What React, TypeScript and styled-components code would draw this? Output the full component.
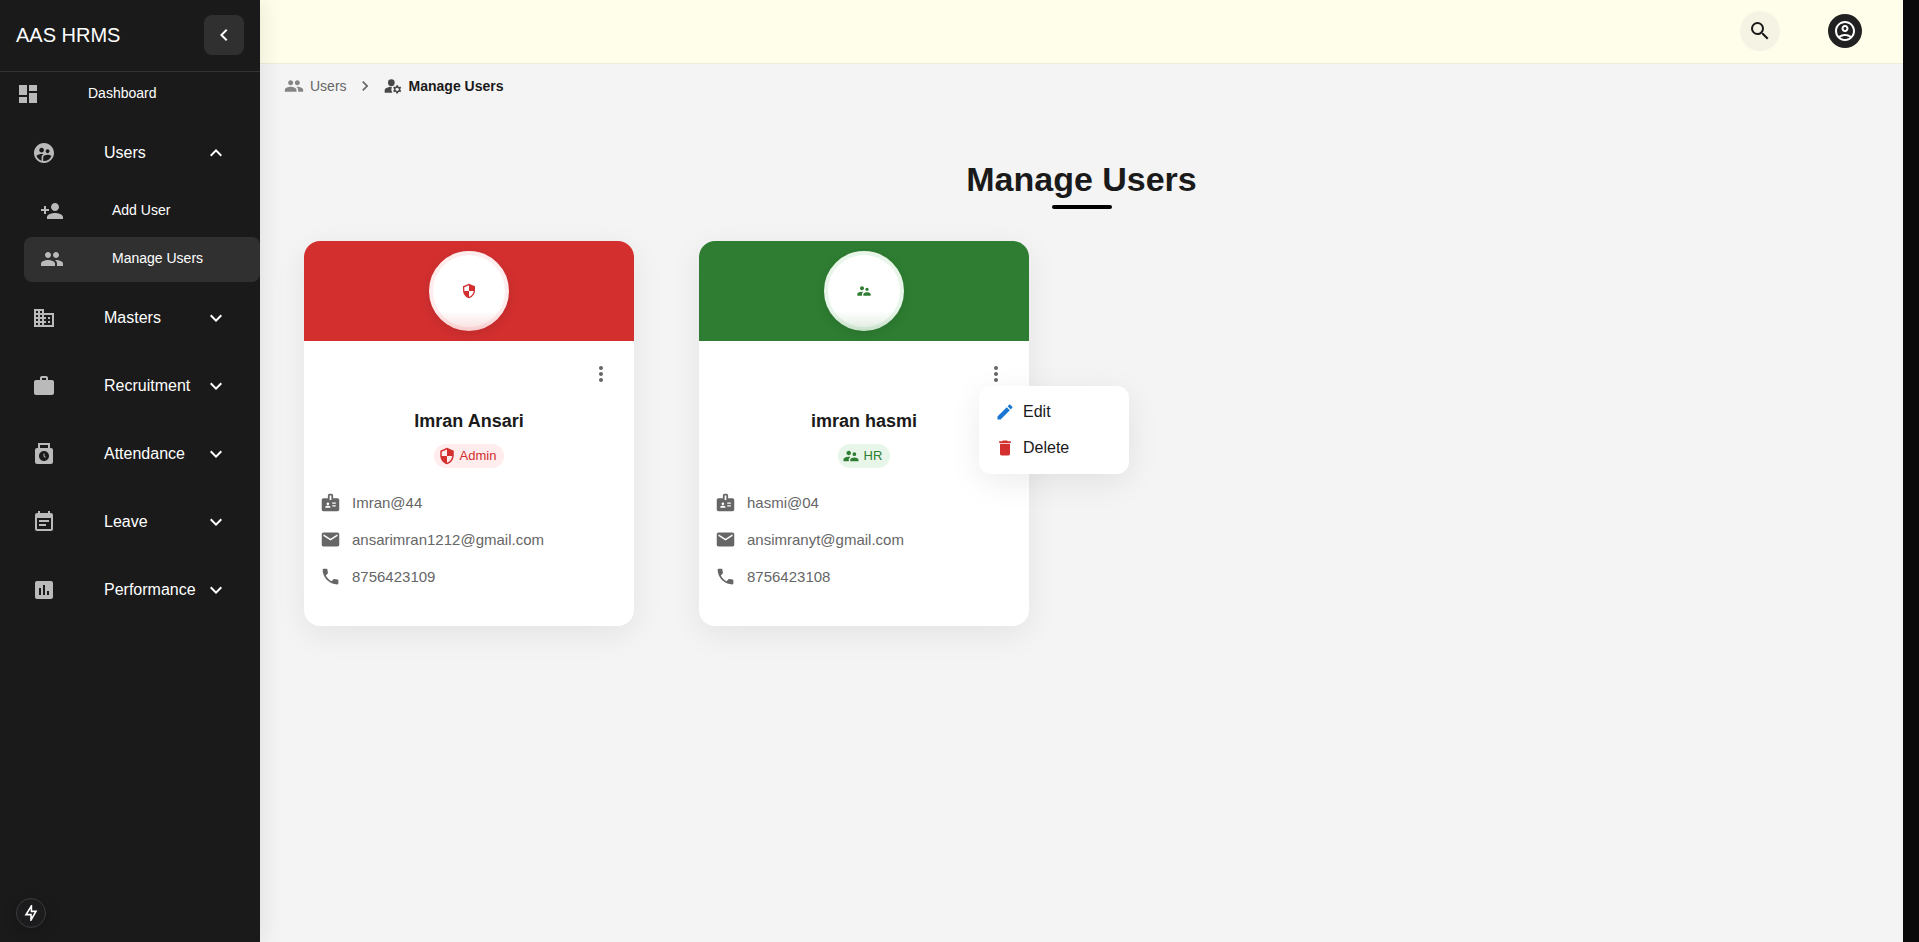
import React, { useState } from 'react';
import styled, { createGlobalStyle } from 'styled-components';
import type { IconType } from 'react-icons';
import {
  MdAssessment,
  MdBadge,
  MdBusiness,
  MdChevronLeft,
  MdDashboard,
  MdDelete,
  MdEdit,
  MdEmail,
  MdEventNote,
  MdExpandLess,
  MdExpandMore,
  MdManageAccounts,
  MdMoreVert,
  MdNavigateNext,
  MdOutlineAccountCircle,
  MdPeople,
  MdPersonAdd,
  MdPhone,
  MdPunchClock,
  MdSearch,
  MdSecurity,
  MdSupervisedUserCircle,
  MdSupervisorAccount,
  MdWork,
} from 'react-icons/md';

const GlobalStyle = createGlobalStyle`
  * { box-sizing: border-box; }
  body {
    margin: 0;
    background: #0a0a0a;
    color: #1a1a1a;
    font-family: "Liberation Sans", Arial, sans-serif;
  }
  button { font: inherit; color: inherit; border: 0; padding: 0; background: none; cursor: pointer; }
  a { color: inherit; text-decoration: none; }
  ul, ol { list-style: none; margin: 0; padding: 0; }
  svg { display: block; flex: none; }
`;

const Shell = styled.div`
  display: flex;
  min-height: 100vh;
  padding-right: 16px;
`;

const Sidebar = styled.aside`
  position: relative;
  z-index: 1;
  flex: 0 0 260px;
  background: #1a1a1a;
  color: #fff;
  box-shadow: 4px 0 20px rgba(0, 0, 0, 0.08);
`;

const Brand = styled.div`
  display: flex;
  align-items: center;
  justify-content: space-between;
  height: 72px;
  padding: 0 16px 1px;
  border-bottom: 1px solid #333;
  font-size: 20px;
  line-height: 30px;
`;

const CollapseButton = styled.button`
  display: grid;
  place-items: center;
  width: 40px;
  height: 40px;
  border-radius: 8px;
  background: #303030;
`;

const NavLink = styled.a<{ $nested?: boolean; $active?: boolean }>`
  display: flex;
  align-items: center;
  gap: 48px;
  height: 45px;
  padding: 0 16px 2px;
  margin-left: ${(p) => (p.$nested ? '24px' : '0')};
  border-radius: 8px;
  background: ${(p) => (p.$active ? '#303030' : 'transparent')};
  font-size: 14px;
  line-height: 19px;
  svg { color: #bababa; }
`;

const NavGroupButton = styled.button`
  display: flex;
  align-items: center;
  width: 100%;
  height: 68px;
  padding: 0 32px;
  font-size: 16px;
  line-height: 24px;
  text-align: left;
`;

const GroupIcon = styled.span`
  color: #bababa;
  margin-right: 48px;
`;

const GroupLabel = styled.span`
  flex: 1;
`;

const NavTop = styled.div`
  padding-bottom: 2px;
`;

const SubList = styled.ul`
  display: grid;
  gap: 3px;
  padding: 2px 0;
`;

const DevBadge = styled.button`
  position: fixed;
  left: 16px;
  bottom: 14px;
  z-index: 2;
  display: grid;
  place-items: center;
  width: 30px;
  height: 30px;
  border: 1px solid #3c3c3c;
  border-radius: 50%;
  background: #1c1c1e;
  box-shadow: 0 4px 16px rgba(0, 0, 0, 0.2);
`;

const Page = styled.div`
  flex: 1;
  min-width: 0;
  background: #f4f4f4;
`;

const TopBar = styled.header`
  display: flex;
  align-items: center;
  justify-content: flex-end;
  gap: 48px;
  height: 64px;
  padding: 0 41px 1px;
  background: #fffeeb;
  border-bottom: 1px solid #eeeddb;
`;

const SearchButton = styled.button`
  display: grid;
  place-items: center;
  width: 40px;
  height: 40px;
  border-radius: 50%;
  background: #f5f3e3;
  color: #1a1a1a;
`;

const AccountButton = styled.button`
  display: grid;
  place-items: center;
  width: 34px;
  height: 34px;
  border-radius: 50%;
  background: #212121;
  color: #fff;
`;

const Main = styled.main`
  padding: 12px 24px 24px;
`;

const Crumbs = styled.ol`
  display: flex;
  align-items: center;
  gap: 8px;
  height: 20px;
  font-size: 14px;
  line-height: 20px;
`;

const Crumb = styled.li<{ $current?: boolean }>`
  display: flex;
  align-items: center;
  gap: 6px;
  color: ${(p) => (p.$current ? '#1a1a1a' : '#666')};
  font-weight: ${(p) => (p.$current ? 700 : 400)};
  svg { color: ${(p) => (p.$current ? '#484848' : '#858585')}; }
`;

const CrumbLink = styled.a`
  display: flex;
  align-items: center;
  gap: 6px;
`;

const CrumbSeparator = styled.li`
  color: #666;
`;

const Title = styled.h1`
  display: flex;
  flex-direction: column;
  align-items: center;
  gap: 5px;
  margin: 62px 0 32px;
  font-size: 34px;
  line-height: 42px;
  font-weight: 700;
  &::after {
    content: "";
    width: 60px;
    height: 4px;
    border-radius: 2px;
    background: #000;
  }
`;

const CardGrid = styled.div`
  display: grid;
  grid-template-columns: repeat(auto-fill, 330px);
  gap: 48px 65px;
  padding: 0 20px;
`;

const Card = styled.article`
  border-radius: 16px;
  background: #fff;
  box-shadow: 0 8px 32px rgba(0, 0, 0, 0.07);
`;

const CardBanner = styled.div<{ $color: string }>`
  position: relative;
  display: grid;
  place-items: center;
  height: 100px;
  border-radius: 16px 16px 0 0;
  background: ${(p) => p.$color};
  &::after {
    content: "";
    position: absolute;
    inset: auto 0 0;
    height: 30px;
    background: linear-gradient(to top, ${(p) => p.$color}40, transparent);
  }
`;

const Avatar = styled.div<{ $color: string; $tint: string }>`
  display: grid;
  place-items: center;
  width: 80px;
  height: 80px;
  border: 4px solid ${(p) => p.$tint};
  border-radius: 50%;
  background: #fff;
  color: ${(p) => p.$color};
  box-shadow: 0 4px 12px rgba(0, 0, 0, 0.1);
`;

const CardBody = styled.div`
  display: flex;
  flex-direction: column;
  align-items: center;
  padding: 16px 16px 39px;
`;

const MenuAnchor = styled.div`
  position: relative;
  align-self: flex-end;
`;

const MoreButton = styled.button`
  display: grid;
  place-items: center;
  width: 34px;
  height: 34px;
  border-radius: 50%;
  color: #666;
`;

const Menu = styled.div`
  position: absolute;
  top: 29px;
  left: 0;
  z-index: 3;
  width: 150px;
  padding: 8px 0;
  border-radius: 12px;
  background: #fff;
  box-shadow: 0 8px 32px rgba(0, 0, 0, 0.08);
`;

const MenuItem = styled.button<{ $iconColor: string }>`
  display: flex;
  align-items: center;
  gap: 8px;
  width: 100%;
  height: 36px;
  padding: 0 16px;
  font-size: 16px;
  line-height: 24px;
  svg { color: ${(p) => p.$iconColor}; }
`;

const UserName = styled.h2`
  margin: 16px 0 9px;
  font-size: 18px;
  line-height: 28px;
  font-weight: 700;
`;

const RoleChip = styled.span<{ $color: string; $tint: string }>`
  display: flex;
  align-items: center;
  gap: 4px;
  height: 24px;
  padding: 0 8px 0 4px;
  border-radius: 12px;
  background: ${(p) => p.$tint};
  color: ${(p) => p.$color};
  font-size: 13px;
  line-height: 22px;
`;

const ContactList = styled.ul`
  display: grid;
  gap: 16px;
  width: 100%;
  margin-top: 24px;
`;

const ContactRow = styled.li`
  display: flex;
  align-items: center;
  gap: 11px;
  height: 21px;
  color: #666;
  font-size: 15px;
  line-height: 20px;
`;

interface NavGroup {
  label: string;
  icon: IconType;
  children?: { label: string; icon: IconType; active?: boolean }[];
}

const navGroups: NavGroup[] = [
  {
    label: 'Users',
    icon: MdSupervisedUserCircle,
    children: [
      { label: 'Add User', icon: MdPersonAdd },
      { label: 'Manage Users', icon: MdPeople, active: true },
    ],
  },
  { label: 'Masters', icon: MdBusiness },
  { label: 'Recruitment', icon: MdWork },
  { label: 'Attendance', icon: MdPunchClock },
  { label: 'Leave', icon: MdEventNote },
  { label: 'Performance', icon: MdAssessment },
];

const roles = {
  Admin: { color: '#d32f2f', tint: '#ffecec', icon: MdSecurity },
  HR: { color: '#2e7d32', tint: '#e8f5e9', icon: MdSupervisorAccount },
};

interface User {
  name: string;
  role: keyof typeof roles;
  username: string;
  email: string;
  phone: string;
}

const users: User[] = [
  { name: 'Imran Ansari', role: 'Admin', username: 'Imran@44', email: 'ansarimran1212@gmail.com', phone: '8756423109' },
  { name: 'imran hasmi', role: 'HR', username: 'hasmi@04', email: 'ansimranyt@gmail.com', phone: '8756423108' },
];

function UserCard({ user, menuOpen, onToggleMenu }: { user: User; menuOpen: boolean; onToggleMenu: () => void }) {
  const { color, tint, icon: RoleIcon } = roles[user.role];
  return (
    <Card>
      <CardBanner $color={color}>
        <Avatar $color={color} $tint={tint}>
          <RoleIcon size={16} />
        </Avatar>
      </CardBanner>
      <CardBody>
        <MenuAnchor>
          <MoreButton aria-label={`Actions for ${user.name}`} aria-expanded={menuOpen} onClick={onToggleMenu}>
            <MdMoreVert size={24} />
          </MoreButton>
          {menuOpen && (
            <Menu role="menu">
              <MenuItem role="menuitem" $iconColor="#1976d2">
                <MdEdit size={20} />
                Edit
              </MenuItem>
              <MenuItem role="menuitem" $iconColor="#d32f2f">
                <MdDelete size={20} />
                Delete
              </MenuItem>
            </Menu>
          )}
        </MenuAnchor>
        <UserName>{user.name}</UserName>
        <RoleChip $color={color} $tint={tint}>
          <RoleIcon size={18} />
          {user.role}
        </RoleChip>
        <ContactList>
          <ContactRow>
            <MdBadge size={21} />
            {user.username}
          </ContactRow>
          <ContactRow>
            <MdEmail size={21} />
            {user.email}
          </ContactRow>
          <ContactRow>
            <MdPhone size={21} />
            {user.phone}
          </ContactRow>
        </ContactList>
      </CardBody>
    </Card>
  );
}

export default function App() {
  const [openMenu, setOpenMenu] = useState<string | null>('hasmi@04');
  const [openGroup, setOpenGroup] = useState<string | null>('Users');

  return (
    <>
      <GlobalStyle />
      <Shell>
        <Sidebar>
          <Brand>
            AAS HRMS
            <CollapseButton aria-label="Collapse sidebar">
              <MdChevronLeft size={24} />
            </CollapseButton>
          </Brand>
          <nav>
            <NavTop>
              <NavLink href="#dashboard">
                <MdDashboard size={24} />
                Dashboard
              </NavLink>
            </NavTop>
            {navGroups.map(({ label, icon: Icon, children }) => {
              const open = openGroup === label;
              return (
                <div key={label}>
                  <NavGroupButton aria-expanded={open} onClick={() => setOpenGroup(open ? null : label)}>
                    <GroupIcon>
                      <Icon size={24} />
                    </GroupIcon>
                    <GroupLabel>{label}</GroupLabel>
                    {open ? <MdExpandLess size={24} /> : <MdExpandMore size={24} />}
                  </NavGroupButton>
                  {open && children && (
                    <SubList>
                      {children.map(({ label: childLabel, icon: ChildIcon, active }) => (
                        <li key={childLabel}>
                          <NavLink href="#users" $nested $active={active}>
                            <ChildIcon size={24} />
                            {childLabel}
                          </NavLink>
                        </li>
                      ))}
                    </SubList>
                  )}
                </div>
              );
            })}
          </nav>
          <DevBadge aria-label="Developer tools">
            <svg width="16" height="16" viewBox="0 0 16 16" fill="none" stroke="#fff" strokeWidth="1.6">
              <path d="M8.4 1 3 9.6H8V15L13 6.4H8.4Z" />
            </svg>
          </DevBadge>
        </Sidebar>
        <Page>
          <TopBar>
            <SearchButton aria-label="Search">
              <MdSearch size={24} />
            </SearchButton>
            <AccountButton aria-label="Account">
              <MdOutlineAccountCircle size={24} />
            </AccountButton>
          </TopBar>
          <Main>
            <nav aria-label="Breadcrumb">
              <Crumbs>
                <Crumb>
                  <CrumbLink href="#users">
                    <MdPeople size={20} />
                    Users
                  </CrumbLink>
                </Crumb>
                <CrumbSeparator aria-hidden="true">
                  <MdNavigateNext size={20} />
                </CrumbSeparator>
                <Crumb $current aria-current="page">
                  <MdManageAccounts size={20} />
                  Manage Users
                </Crumb>
              </Crumbs>
            </nav>
            <Title>Manage Users</Title>
            <CardGrid>
              {users.map((user) => (
                <UserCard
                  key={user.username}
                  user={user}
                  menuOpen={openMenu === user.username}
                  onToggleMenu={() => setOpenMenu(openMenu === user.username ? null : user.username)}
                />
              ))}
            </CardGrid>
          </Main>
        </Page>
      </Shell>
    </>
  );
}
